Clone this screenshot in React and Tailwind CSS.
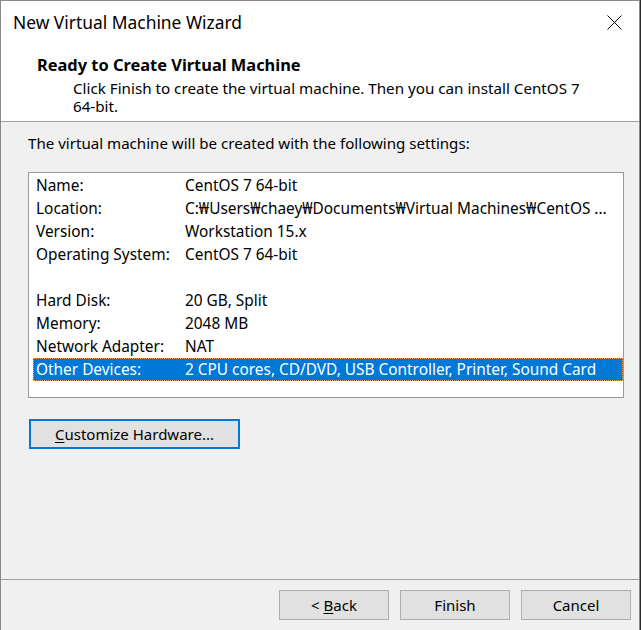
import React from "react";

const FONT = { fontFamily: '"Noto Sans", "Open Sans", sans-serif' };

const rows = [
  ["Name:", "CentOS 7 64-bit"],
  ["Location:", "C:\u20A9Users\u20A9chaey\u20A9Documents\u20A9Virtual Machines\u20A9CentOS ..."],
  ["Version:", "Workstation 15.x"],
  ["Operating System:", "CentOS 7 64-bit"],
  ["", ""],
  ["Hard Disk:", "20 GB, Split"],
  ["Memory:", "2048 MB"],
  ["Network Adapter:", "NAT"],
  ["Other Devices:", "2 CPU cores, CD/DVD, USB Controller, Printer, Sound Card"],
];

function WizButton({ children, className = "" }) {
  return (
    <button
      type="button"
      className={`flex h-[30px] w-[110px] items-center justify-center border border-[#adadad] bg-[#e1e1e1] text-[15px] text-black ${className}`}
    >
      {children}
    </button>
  );
}

export default function App() {
  return (
    <div className="h-[630px] w-[641px] overflow-hidden bg-[#2b2b2b]" style={FONT}>
      <div className="flex h-[631px] w-[640px] flex-col border-x border-t border-[#888888] bg-white">
        {/* title bar */}
        <div className="flex h-[44px] shrink-0 items-center">
          <div className="pl-[12px] text-[17.4px] leading-none text-black">New Virtual Machine Wizard</div>
          <div className="ml-auto mr-[2px] flex h-full w-[46px] items-center justify-center">
            <svg width="15" height="15" viewBox="0 0 15 15" className="-mt-[2px]">
              <path d="M0.5 0.5 L14.5 14.5 M14.5 0.5 L0.5 14.5" stroke="#000" strokeWidth="1" fill="none" />
            </svg>
          </div>
        </div>

        {/* header */}
        <div className="shrink-0 border-b border-[#a0a0a0] bg-white pb-[6px] pl-[36px] pt-[10px] text-black">
          <div className="text-[16.4px] font-bold leading-[20px]">Ready to Create Virtual Machine</div>
          <div className="mt-[4px] pl-[36px] pr-[40px] text-[15.2px] leading-[18px]">
            Click Finish to create the virtual machine. Then you can install CentOS 7 64-bit.
          </div>
        </div>

        {/* body */}
        <div className="flex flex-1 flex-col bg-[#f0f0f0] px-[27px] pt-[11px]">
          <div className="text-[15.1px] leading-[20px] text-black">
            The virtual machine will be created with the following settings:
          </div>
          <div className="mt-[19px] h-[226px] w-[596px] border border-[#9a9a9a] bg-white pt-[1px]">
            {rows.map(([k, v], i) => {
              const sel = i === rows.length - 1;
              return (
                <div
                  key={i}
                  className={`ml-[4px] flex h-[23px] items-center pl-[3px] text-[15.4px] ${
                    sel ? "bg-[#0078d7] text-white outline-1 -outline-offset-1 outline-dotted outline-[#e8a060]" : "text-black"
                  }`}
                >
                  <div className="w-[149px] shrink-0 whitespace-nowrap">{k}</div>
                  <div className="whitespace-nowrap">{v}</div>
                </div>
              );
            })}
          </div>
          <button
            type="button"
            className="ml-[1px] mt-[21px] flex h-[30px] w-[211px] items-center justify-center border-2 border-[#0078d7] bg-[#e1e1e1] text-[15px] text-black"
          >
            <span>
              <span className="underline underline-offset-2">C</span>ustomize Hardware...
            </span>
          </button>
        </div>

        {/* footer */}
        <div className="flex h-[52px] shrink-0 items-start justify-end gap-[11px] border-t border-[#a0a0a0] bg-[#f0f0f0] pr-[8px] pt-[10px]">
          <WizButton>
            <span>
              &lt; <span className="underline underline-offset-2">B</span>ack
            </span>
          </WizButton>
          <WizButton>Finish</WizButton>
          <WizButton>Cancel</WizButton>
        </div>
      </div>
    </div>
  );
}
